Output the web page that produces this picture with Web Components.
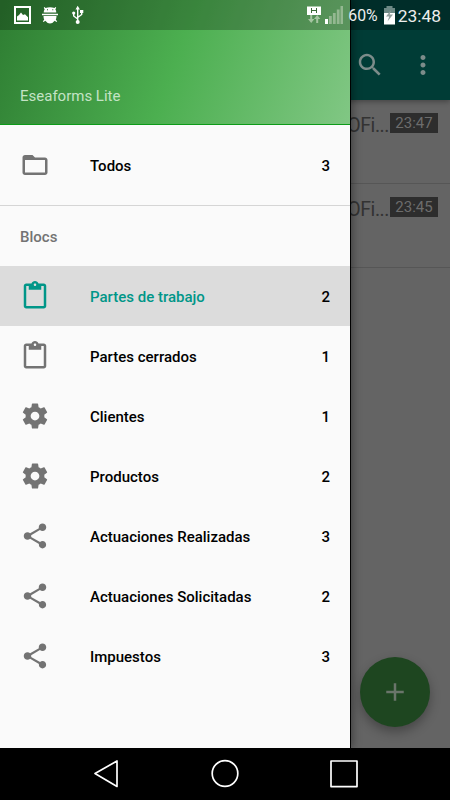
<!DOCTYPE html>
<html lang="es">
<head>
<meta charset="utf-8">
<title>Eseaforms Lite</title>
<style>
html,body{margin:0;height:100%;background:#000}
body{font-family:Roboto,"Liberation Sans",sans-serif;overflow:hidden}
</style>
</head>
<body>
<ef-phone></ef-phone>
<script>
const define = (name, html) => customElements.define(name, class extends HTMLElement {
  constructor() {
    super();
    this.attachShadow({mode: 'open'}).innerHTML = typeof html === 'function' ? html(this) : html;
  }
});

const paths = {
  folder: 'M20 6h-8l-2-2H4c-1.100 0-1.990.9-1.990 2L2 18c0 1.100.9 2 2 2h16c1.100 0 2-.9 2-2V8c0-1.100-.9-2-2-2zm0 12H4V8h16v10z',
  clip: 'M19 2h-4.180C14.400.84 13.300 0 12 0c-1.300 0-2.400.84-2.820 2H5c-1.100 0-2 .9-2 2v16c0 1.100.9 2 2 2h14c1.100 0 2-.9 2-2V4c0-1.100-.9-2-2-2zm-7 0c.55 0 1 .45 1 1s-.45 1-1 1-1-.45-1-1 .45-1 1-1zm7 18H5V4h2v3h10V4h2v16z',
  gear: 'M19.430 12.980c.04-.32.07-.64.07-.98s-.03-.66-.07-.98l2.110-1.650c.19-.15.24-.42.12-.64l-2-3.460c-.12-.22-.39-.3-.61-.22l-2.490 1c-.52-.4-1.080-.73-1.690-.98l-.38-2.650C14.460 2.180 14.250 2 14 2h-4c-.25 0-.46.18-.49.42l-.38 2.650c-.61.25-1.170.59-1.690.98l-2.490-1c-.23-.09-.49 0-.61.22l-2 3.460c-.13.22-.07.49.12.64l2.110 1.650c-.04.32-.07.65-.07.98s.03.66.07.98l-2.110 1.650c-.19.15-.24.42-.12.64l2 3.460c.12.22.39.3.61.22l2.490-1c.52.4 1.080.73 1.690.98l.38 2.650c.03.24.24.42.49.42h4c.25 0 .46-.18.49-.42l.38-2.650c.61-.25 1.170-.59 1.690-.98l2.490 1c.23.09.49 0 .61-.22l2-3.460c.12-.22.07-.49-.12-.64l-2.110-1.650zM12 15.500c-1.930 0-3.500-1.570-3.500-3.500s1.570-3.500 3.500-3.500 3.500 1.570 3.500 3.500-1.570 3.500-3.500 3.500z',
  share: 'M18 16.080c-.76 0-1.440.3-1.960.77L8.910 12.700c.05-.23.09-.46.09-.7s-.04-.47-.09-.7l7.050-4.110c.54.5 1.250.81 2.040.81 1.660 0 3-1.340 3-3s-1.340-3-3-3-3 1.340-3 3c0 .24.04.47.09.7L8.040 9.810C7.500 9.310 6.790 9 6 9c-1.660 0-3 1.340-3 3s1.340 3 3 3c.79 0 1.500-.31 2.040-.81l7.120 4.160c-.05.21-.08.43-.08.65 0 1.610 1.310 2.920 2.920 2.920s2.920-1.310 2.920-2.920-1.310-2.920-2.920-2.920z',
  search: 'M15.500 14h-.79l-.28-.27C15.410 12.590 16 11.110 16 9.500 16 5.910 13.090 3 9.500 3S3 5.910 3 9.500 5.910 16 9.500 16c1.610 0 3.090-.59 4.230-1.570l.27.28v.79l5 4.990L20.490 19l-4.990-5zm-6 0C7.010 14 5 11.990 5 9.500S7.010 5 9.500 5 14 7.010 14 9.500 11.990 14 9.500 14z',
  more: 'M12 8c1.100 0 2-.9 2-2s-.9-2-2-2-2 .9-2 2 .9 2 2 2zm0 2c-1.100 0-2 .9-2 2s.9 2 2 2 2-.9 2-2-.9-2-2-2zm0 6c-1.100 0-2 .9-2 2s.9 2 2 2 2-.9 2-2-.9-2-2-2z',
  plus: 'M19 13h-6v6h-2v-6H5v-2h6V5h2v6h6v2z'
};

define('ef-icon', el => `<style>:host{display:block;width:30px;height:30px;flex:none}svg{display:block;width:100%;height:100%;fill:currentColor}</style>
<svg viewBox="0 0 24 24"><path d="${paths[el.getAttribute('name')]}"/></svg>`);

define('ef-nav-item', el => `<style>
:host{display:flex;align-items:center;height:60px;padding:0 20px;box-sizing:border-box;color:#000;font-weight:500;font-size:15px;line-height:20px}
:host([active]){background:#dcdcdc}
:host([active]) .label,:host([active]) ef-icon{color:#009688}
ef-icon{color:#737373;margin-right:40px}
span{padding-top:2px}
.label{flex:1;white-space:nowrap}
</style><ef-icon name="${el.getAttribute('icon')}"></ef-icon><span class="label"><slot></slot></span><span>${el.getAttribute('count')}</span>`);

define('ef-drawer', `<style>
:host{display:flex;flex-direction:column;background:#fafafa}
header{height:125px;box-sizing:border-box;padding:0 20px 18px;display:flex;align-items:flex-end;border-bottom:1px solid #0c9b18;
background:linear-gradient(109.65deg,#2e7d32,#4caf50 50%,#81c784) border-box;color:#c3e3c5;font-size:15px;line-height:20px}
.all{padding:10px 0;border-bottom:1px solid #d5d5d5}
h2{margin:0;padding:0 20px;height:60px;line-height:63px;font-size:15px;font-weight:500;color:#737373}
</style>
<header>Eseaforms Lite</header>
<div class="all"><ef-nav-item icon="folder" count="3">Todos</ef-nav-item></div>
<h2>Blocs</h2>
<nav>
<ef-nav-item icon="clip" count="2" active>Partes de trabajo</ef-nav-item>
<ef-nav-item icon="clip" count="1">Partes cerrados</ef-nav-item>
<ef-nav-item icon="gear" count="1">Clientes</ef-nav-item>
<ef-nav-item icon="gear" count="2">Productos</ef-nav-item>
<ef-nav-item icon="share" count="3">Actuaciones Realizadas</ef-nav-item>
<ef-nav-item icon="share" count="2">Actuaciones Solicitadas</ef-nav-item>
<ef-nav-item icon="share" count="3">Impuestos</ef-nav-item>
</nav>`);

define('ef-row', `<style>
:host{display:flex;justify-content:flex-end;align-items:flex-start;gap:1px;height:84px;box-sizing:border-box;padding:12px 12px 0 0;border-bottom:1px solid #565656}
.t{font-size:19.500px;line-height:28px;color:#333;white-space:nowrap;letter-spacing:-.45px}
.d{background:#2d2d2d;color:#6c6c6c;font-size:15px;line-height:21px;height:20px;width:48px;text-align:center;margin-top:1px}
</style><span class="t">OFi...</span><span class="d"><slot></slot></span>`);

define('ef-screen', `<style>
:host{display:flex;flex-direction:column;background:#646464}
.bar{height:100px;box-sizing:border-box;padding:30px 12px 0 0;display:flex;align-items:center;justify-content:flex-end;gap:23px;background:#003c36;color:#7c8c8a;box-shadow:0 2px 5px rgba(0,0,0,.3)}
.fab{position:absolute;right:20px;bottom:21px;width:70px;height:70px;border-radius:50%;background:#1e4620;color:#6a756a;display:flex;align-items:center;justify-content:center;box-shadow:0 5px 11px rgba(0,0,0,.3)}
</style>
<div class="bar"><ef-icon name="search"></ef-icon><ef-icon name="more"></ef-icon></div>
<ef-row>23:47</ef-row><ef-row>23:45</ef-row>
<div class="fab"><ef-icon name="plus"></ef-icon></div>`);

define('ef-status', `<style>
:host{display:flex;align-items:center;height:30px;box-sizing:border-box;padding:0 9px 0 14px;background:rgba(0,0,0,.24);color:#eee;font-size:17.400px;line-height:30px}
svg{display:block;flex:none}.sp{flex:1}
.pct,.clk{padding-top:1px}
.pct{font-size:15.800px}
.clk{margin-left:2px}
</style>
<svg width="80" height="30" viewBox="14 0 80 30" fill="#fff">
<path fill-rule="evenodd" d="M14 6h17v18H14zM16 8v14h13V8z"/><path d="M17 20.500v-4l2-1.500 2-2.500 2 2.500 2-.8 3 3v3.300z"/>
<path d="M44.500 7l1 1q4.500-1.600 9 0l1-1 .7.600-.8 1.800q.9 1.200.9 3H43.700q0-1.800.9-3l-.8-1.800zM42 13.700h16v1.500H42zM43.500 16h13q0 2.500-.7 3.700l1.400 1.500-.8.8-1.700-1.200Q52.600 23.600 50 23.600t-4.700-2.800L43.600 22l-.8-.8 1.400-1.500Q43.500 18.500 43.500 16z"/>
<g fill="none" stroke="#fff" stroke-width="1.400"><path d="M77.700 8v14M77.700 19l-4-3v-3M77.700 17.500l4-3V12"/></g><path d="M75.500 9.500l2.200-3.700 2.200 3.700zM80 10h3.300v3H80z"/><circle cx="73.700" cy="13" r="1.600"/><circle cx="77.700" cy="22" r="2"/>
<path d="M47 9.300h1v1h-1zM52.300 9.300h1v1h-1z" fill="#286129"/></svg>
<span class="sp"></span>
<svg width="38" height="30" viewBox="307 0 38 30" style="margin-right:4px">
<path fill="#fff" d="M308 6.500h14V15h-14z"/><path fill="none" stroke="#3c6b39" stroke-width="1" d="M312.500 8v5M317.500 8v5M312.500 10.500h5"/>
<path fill="#a5c5a1" d="M311.200 15h2v4h2.200l-3.200 4-3.200-4h2.200zM317.200 23h2v-4h2.200l-3.200-4-3.200 4h2.200z"/>
<path fill="#fff" d="M326 19h3v5h-3z"/><path fill="#94b891" d="M330 16h2.800v8H330zM333.900 13h2.800v11h-2.800zM337.800 9.500h2.800V24h-2.800zM341.500 6h2.500v18h-2.500z"/></svg>
<span class="pct">60%</span>
<svg width="14" height="30" viewBox="382 0 14 30" style="margin-left:4px"><path fill="#6d8985" d="M386.500 6h6v2h2.500v6h-11V8h2.500z"/><path fill="#fff" d="M384 13h11v11.500h-11z"/><path fill="#929f9d" d="M391 10l-5 6.500h3.200l-1.700 5 5.500-7h-3.300z"/></svg>
<span class="clk">23:48</span>`);

define('ef-navbar', `<style>
:host{display:flex;height:52px;background:#000;justify-content:center}
svg{display:block}
</style><svg width="450" height="52" viewBox="0 748 450 52" fill="none" stroke="#fff" stroke-width="1.700" stroke-linejoin="round"><path d="M95 773.500L117 761v25.500z"/><circle cx="225" cy="773.500" r="12.800"/><path d="M331 761h26v25.600h-26z"/></svg>`);

define('ef-phone', `<style>
:host{display:grid;grid-template:748px 52px/350px 100px;width:450px;height:800px}
ef-screen{grid-area:1/1/2/3;position:relative}
ef-drawer{grid-area:1/1/2/2;z-index:1;border-right:1px solid #000;margin-right:-1px;box-shadow:2px 0 8px rgba(0,0,0,.35);clip-path:inset(0 -16px 0 0)}
ef-status{grid-area:1/1/2/3;z-index:2;align-self:start}
ef-navbar{grid-area:2/1/3/3;z-index:3}
</style>
<ef-screen></ef-screen><ef-drawer></ef-drawer><ef-status></ef-status><ef-navbar></ef-navbar>`);
</script>
</body>
</html>
